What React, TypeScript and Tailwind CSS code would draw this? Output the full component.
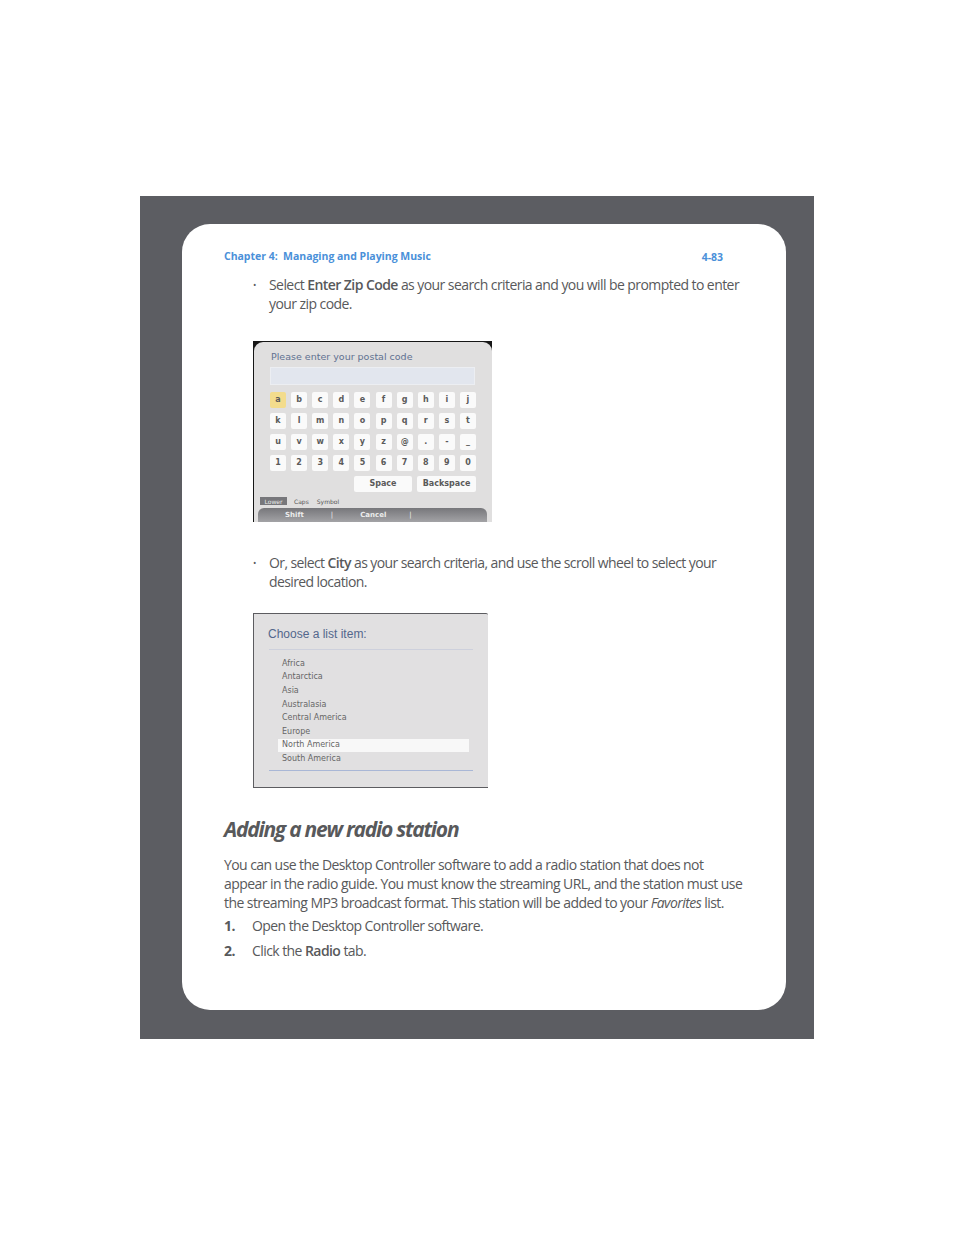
const rows = [
  ['a', 'b', 'c', 'd', 'e', 'f', 'g', 'h', 'i', 'j'],
  ['k', 'l', 'm', 'n', 'o', 'p', 'q', 'r', 's', 't'],
  ['u', 'v', 'w', 'x', 'y', 'z', '@', '.', '-', '_'],
  ['1', '2', '3', '4', '5', '6', '7', '8', '9', '0'],
];

const places = ['Africa', 'Antarctica', 'Asia', 'Australasia', 'Central America', 'Europe', 'North America', 'South America'];

function Keyboard() {
  return (
    <div className="w-[239px] h-[181px] bg-[#161616] overflow-hidden font-['DejaVu_Sans',sans-serif]">
      <div className="mt-px ml-px h-[180px] w-[238px] rounded-t-[9px] bg-[#e0dfdf] flex flex-col pl-[16px]">
        <div className="pt-[8px] pl-[1px] h-[25px] text-[9.5px] leading-[14px] text-[#5f7191]">Please enter your postal code</div>
        <div className="w-[205px] h-[18px] bg-[#e2e6ee] border border-[#eceef2]" />
        <div className="mt-[7px] flex flex-col gap-[5px]">
          {rows.map((row, i) => (
            <div key={i} className="flex gap-[5px] w-[206px] justify-between">
              {row.map((k) => (
                <div
                  key={k}
                  className={
                    'w-[16px] h-[16px] rounded-[2px] flex items-center justify-center text-[8px] font-bold text-[#5a5a5a] ' +
                    (k === 'a' ? 'bg-[#f3dc8c]' : 'bg-[#fafafa]')
                  }
                >
                  {k}
                </div>
              ))}
            </div>
          ))}
          <div className="flex gap-[5px] pl-[84px]">
            <div className="w-[58px] h-[16px] rounded-[2px] bg-[#fafafa] flex items-center justify-center text-[8px] font-bold text-[#5a5a5a]">Space</div>
            <div className="w-[59px] h-[16px] rounded-[2px] bg-[#fafafa] flex items-center justify-center text-[8px] font-bold text-[#5a5a5a]">Backspace</div>
          </div>
        </div>
        <div className="-ml-[10px] mt-[5px] flex items-center h-[8px] text-[6px] text-[#555]">
          <div className="w-[27px] h-[8px] bg-[#77777b] text-[#e8e8e8] flex items-center justify-center">Lower</div>
          <span className="ml-[7px]">Caps</span>
          <span className="ml-[8px]">Symbol</span>
        </div>
        <div className="-ml-[12px] mt-[3px] w-[229px] h-[14px] pt-px rounded-t-[6px] bg-gradient-to-b from-[#77777b] to-[#a3a3a6] flex items-center text-[7px] font-bold text-[#ececec]">
          <span className="ml-[27px]">Shift</span>
          <span className="ml-[27px] font-normal">|</span>
          <span className="ml-[27px]">Cancel</span>
          <span className="ml-[23px] font-normal">|</span>
        </div>
      </div>
    </div>
  );
}

function ListScreen() {
  return (
    <div className="w-[235px] h-[175px] border border-[#5c5c60] border-r-0 bg-[#e1e0e1] font-['DejaVu_Sans',sans-serif] rounded-tr-[2px]">
      <div className="pl-[14px] pt-[12px] text-[12px] leading-[16px] text-[#53678c] font-['Liberation_Sans',sans-serif]">Choose a list item:</div>
      <div className="ml-[15px] mt-[7px] w-[204px] border-t border-[#cdd0dc]" />
      <div className="mt-[7px] ml-[24px] w-[191px] flex flex-col">
        {places.map((p) => (
          <div
            key={p}
            className={
              'h-[13.6px] pl-[4px] flex items-center text-[8px] text-[#666] ' +
              (p === 'North America' ? 'bg-[#f8f8f8]' : '')
            }
          >
            {p}
          </div>
        ))}
      </div>
      <div className="ml-[15px] mt-[4px] w-[204px] border-t border-[#a9b7d6]" />
    </div>
  );
}

export default function App() {
  return (
    <div className="min-h-[1235px] bg-white pt-[196px] pl-[140px] font-['Open_Sans',sans-serif] text-[#58595b]">
      <div className="w-[674px] h-[843px] bg-[#5c5d62] pt-[28px] pl-[42px]">
        <div className="w-[604px] h-[786px] bg-white rounded-[28px] pt-[25px] pl-[42px]">
          <div className="flex w-[499px] justify-between text-[10.5px] leading-[14px] font-bold tracking-[-0.02px] text-[#4a90d9]">
            <span>Chapter 4:&nbsp; Managing and Playing Music</span>
            <span className="pt-px">4-83</span>
          </div>

          <div className="mt-[11px] ml-[29px] relative pl-[16px] w-[500px] text-[14px] leading-[19px] tracking-[-0.57px]">
            <span className="absolute left-0 top-0 text-[9px]">•</span>
            Select <b className="font-semibold">Enter Zip Code</b> as your search criteria and you will be prompted to enter your zip code.
          </div>

          <div className="mt-[28px] ml-[29px]">
            <Keyboard />
          </div>

          <div className="mt-[31px] ml-[29px] relative pl-[16px] w-[490px] text-[14px] leading-[19px] tracking-[-0.6px]">
            <span className="absolute left-0 top-0 text-[9px]">•</span>
            Or, select <b className="font-semibold">City</b> as your search criteria, and use the scroll wheel to select your desired location.
          </div>

          <div className="mt-[22px] ml-[29px]">
            <ListScreen />
          </div>

          <h2 className="mt-[27px] text-[21px] leading-[28px] font-bold italic tracking-[-1.25px]">Adding a new radio station</h2>

          <p className="mt-[12px] w-[524px] text-[14px] leading-[19px] tracking-[-0.57px]">
            You can use the Desktop Controller software to add a radio station that does not appear in the radio guide. You must know the streaming URL, and the station must use the streaming MP3 broadcast format. This station will be added to your <i>Favorites</i> list.
          </p>

          <div className="mt-[4px] flex text-[14px] leading-[19px] tracking-[-0.57px]">
            <b className="w-[28px] font-bold">1.</b>
            <span>Open the Desktop Controller software.</span>
          </div>
          <div className="mt-[6px] flex text-[14px] leading-[19px] tracking-[-0.57px]">
            <b className="w-[28px] font-bold">2.</b>
            <span>Click the <b className="font-semibold">Radio</b> tab.</span>
          </div>
        </div>
      </div>
    </div>
  );
}
